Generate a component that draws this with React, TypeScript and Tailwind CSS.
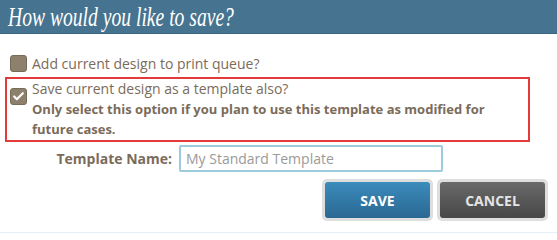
import { Check } from "lucide-react"

export default function App() {
  return (
    <div className="w-[557px] h-[233px] bg-white overflow-hidden border-b border-[#e3eff6]" style={{ fontFamily: '"Open Sans", "DejaVu Sans", sans-serif' }}>
      <div className="h-[34px] bg-[#46738f] border-b border-[#3b6480] flex items-center pl-[8px] overflow-hidden">
        <h2
          className="text-white text-[28px] italic leading-none origin-left scale-x-[0.7] whitespace-nowrap pt-[1px]"
          style={{ fontFamily: '"Liberation Serif", serif' }}
        >
          How would you like to save?
        </h2>
      </div>

      <div className="pt-[20px] pl-[5px] pr-[9px] text-[#7b6b5a] text-[14px]">
        <label className="flex items-center gap-[5px] pl-[5px] h-[18px] mr-[18px]">
          <span className="w-[17px] h-[17px] rounded-[3px] bg-[#8d806c] border border-[#776b59] shrink-0" />
          <span>Add current design to print queue?</span>
        </label>

        <div className="mt-[5px] mr-[18px] border-2 border-[#e53a3a] flex gap-[5px] pl-[3px] pb-[1px] leading-[20px]">
          <span className="w-[17px] h-[17px] mt-[9px] rounded-[3px] bg-[#8d806c] border border-[#776b59] shrink-0 flex items-center justify-center">
            <Check className="w-[13px] h-[13px] text-white" strokeWidth={4} />
          </span>
          <div>
            <div>Save current design as a template also?</div>
            <div className="font-bold text-[13px]">Only select this option if you plan to use this template as modified for future cases.</div>
          </div>
        </div>

        <div className="mt-[3px] flex items-center">
          <label className="w-[174px] text-right pr-[7px] font-bold text-[14px]">Template Name:</label>
          <input
            className="w-[264px] h-[27px] border-2 border-[#9ccbdc] rounded-[2px] px-[5px] text-[14px] text-[#555] placeholder:text-[#9a9a9a] outline-none"
            placeholder="My Standard Template"
          />
        </div>

        <div className="mt-[7px] flex justify-end gap-[4px]">
          <button className="w-[111px] h-[42px] rounded-[5px] bg-[#dedede] p-[3px]">
            <span className="flex h-full items-center justify-center rounded-[3px] bg-gradient-to-b from-[#3c8cbc] to-[#2a6893] text-white font-bold text-[14px]">SAVE</span>
          </button>
          <button className="w-[111px] h-[42px] rounded-[5px] bg-[#dedede] p-[3px]">
            <span className="flex h-full items-center justify-center rounded-[3px] bg-gradient-to-b from-[#6a6a6a] to-[#474747] text-[#e4e4e4] font-bold text-[14px]">CANCEL</span>
          </button>
        </div>
      </div>
    </div>
  )
}
